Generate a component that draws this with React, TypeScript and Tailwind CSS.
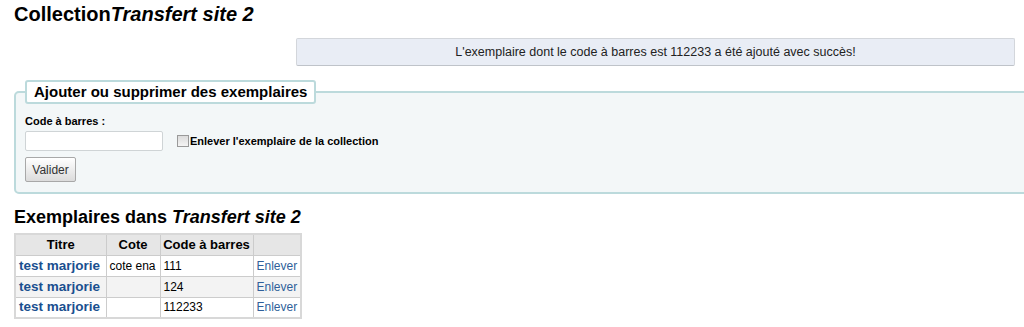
export default function App() {
  const rows = [
    { title: 'test marjorie', cote: 'cote ena', code: '111' },
    { title: 'test marjorie', cote: '', code: '124' },
    { title: 'test marjorie', cote: '', code: '112233' },
  ]

  return (
    <div className="w-full h-[327px] overflow-hidden bg-white pl-[14px] font-['Liberation_Sans',Arial,sans-serif] text-black">
      <h1 className="pt-[3px] text-[20px] font-bold leading-[22px]">
        Collection<i>Transfert site 2</i>
      </h1>

      <div className="ml-[282px] mr-[9px] mt-[13px] h-[28px] flex items-center justify-center rounded-[2px] border border-[#d3d6db] border-b-[#bfc3c9] bg-[#e9edf5] text-[12.5px] text-[#222]">
        L'exemplaire dont le code à barres est 112233 a été ajouté avec succès!
      </div>

      <fieldset className="mt-[14px] mr-[-12px] rounded-[5px] border-2 border-[#bcdadc] bg-[#f3f7f8] px-[9px] pb-[10px]">
        <legend className="rounded-[3px] border-2 border-[#bcdadc] bg-white px-[7px] text-[15px] font-bold leading-[20px]">
          Ajouter ou supprimer des exemplaires
        </legend>
        <div className="mt-[10px] text-[11px] font-bold leading-[14px]">Code à barres :</div>
        <div className="mt-[3px] flex items-center">
          <input
            type="text"
            className="h-[20px] w-[138px] rounded-[2px] border border-[#cfd4d6] bg-white"
          />
          <label className="ml-[14px] flex items-center text-[11px] font-bold">
            <span className="mr-[1px] inline-block h-[12px] w-[12px] border border-[#9a9a9a] bg-gradient-to-b from-[#dcdcdc] to-[#f4f4f4]" />
            Enlever l'exemplaire de la collection
          </label>
        </div>
        <button className="mt-[6px] h-[25px] w-[51px] rounded-[2px] border border-[#a8a8a8] bg-gradient-to-b from-white to-[#dcdcdc] text-[12px] text-[#333]">
          Valider
        </button>
      </fieldset>

      <h2 className="mt-[12px] text-[18px] font-bold leading-[22px]">
        Exemplaires dans <i>Transfert site 2</i>
      </h2>

      <table className="mt-[5px] w-[286px] table-fixed border-collapse border-2 border-[#d8d8d8] text-[12px] leading-[14px]">
        <thead>
          <tr className="h-[21px] bg-[#e6e6e6] text-[13px] font-bold">
            <th className="w-[91px] whitespace-nowrap border border-[#cccccc] px-[2px]">Titre</th>
            <th className="w-[54px] whitespace-nowrap border border-[#cccccc] px-[2px]">Cote</th>
            <th className="w-[93px] whitespace-nowrap border border-[#cccccc] px-[2px]">Code à barres</th>
            <th className="w-[48px] border border-[#cccccc] px-[2px]"></th>
          </tr>
        </thead>
        <tbody>
          {rows.map((row, i) => (
            <tr key={i} className={i % 2 === 1 ? 'h-[21px] bg-[#f3f3f3]' : 'h-[21px] bg-white'}>
              <td className="whitespace-nowrap border border-[#cccccc] px-[3px] text-[13.5px] font-bold text-[#1a4f8f]">{row.title}</td>
              <td className="whitespace-nowrap border border-[#cccccc] px-[3px]">{row.cote}</td>
              <td className="border border-[#cccccc] px-[3px]">{row.code}</td>
              <td className="border border-[#cccccc] px-[3px] text-[#2f5f9a]">Enlever</td>
            </tr>
          ))}
        </tbody>
      </table>
    </div>
  )
}
